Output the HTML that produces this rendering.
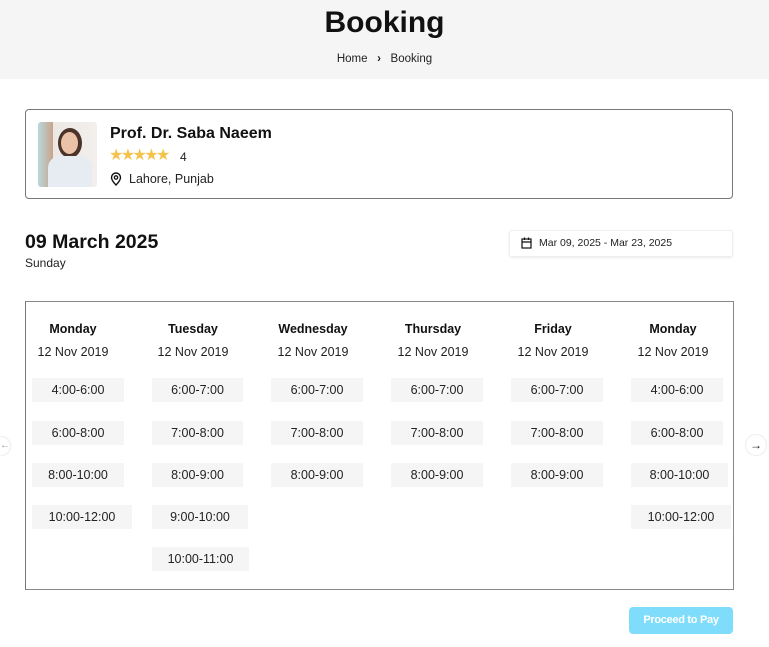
<!DOCTYPE html>
<html><head><meta charset="utf-8"><style>
*{margin:0;padding:0;box-sizing:border-box}
body{width:769px;height:647px;background:#fff;font-family:"Liberation Sans",Arial,sans-serif;color:#111;position:relative;overflow:hidden}
.a{position:absolute}
.hdr{left:0;top:0;width:769px;height:79px;background:#f5f5f5}
.slot{position:absolute;height:24px;background:#f5f5f5;font-size:12.5px;color:#222;line-height:24px;text-align:center}
.day{position:absolute;width:120px;text-align:center;font-size:12.5px;font-weight:bold;top:322px}
.dt{position:absolute;width:120px;text-align:center;font-size:12.5px;top:345px;color:#222}
</style></head><body>
<div class="a hdr"></div>
<div class="a" style="left:0;width:769px;top:6px;text-align:center;font-size:30px;font-weight:bold">Booking</div>
<div class="a" style="left:0;width:769px;top:53px;text-align:center;font-size:11.5px;color:#222">Home &nbsp;&nbsp;<b>›</b>&nbsp;&nbsp; Booking</div>

<div class="a" style="left:25px;top:109px;width:708px;height:90px;border:1px solid #777;border-radius:4px"></div>
<div class="a" style="left:38px;top:122px;width:59px;height:65px;border-radius:3px;background:linear-gradient(90deg,#b8d8dc 0,#c9a48c 25%,#ece8e4 25%,#f2efec 100%);overflow:hidden">
<div class="a" style="left:20px;top:6px;width:24px;height:30px;border-radius:50%;background:#4a3328"></div>
<div class="a" style="left:23px;top:10px;width:17px;height:22px;border-radius:50%;background:#e9c2a8"></div>
<div class="a" style="left:10px;top:34px;width:44px;height:34px;border-radius:12px 12px 0 0;background:#e6ecf2"></div>
</div>
<div class="a" style="left:110px;top:125px;font-size:16px;font-weight:bold">Prof. Dr. Saba Naeem</div>
<div class="a" style="left:109px;top:145px;font-size:16px;color:#f4c34d;letter-spacing:-2.6px">★★★★★</div>
<div class="a" style="left:180px;top:150px;font-size:12px;color:#222">4</div>
<svg class="a" style="left:110px;top:172px" width="12" height="14" viewBox="0 0 12 14"><path d="M6 13C6 13 1.5 8.5 1.5 5.5A4.5 4.5 0 0 1 10.5 5.5C10.5 8.5 6 13 6 13Z" fill="none" stroke="#111" stroke-width="1.4"/><circle cx="6" cy="5.5" r="1.7" fill="none" stroke="#111" stroke-width="1.3"/></svg>
<div class="a" style="left:129px;top:172px;font-size:12.5px;color:#222">Lahore, Punjab</div>

<div class="a" style="left:25px;top:231px;font-size:19.5px;font-weight:bold">09 March 2025</div>
<div class="a" style="left:25px;top:256px;font-size:12px;color:#222">Sunday</div>
<div class="a" style="left:509px;top:230px;width:224px;height:27px;border:1px solid #eee;border-radius:3px;box-shadow:0 1px 2px rgba(0,0,0,.08)"></div>
<svg class="a" style="left:521px;top:237px" width="11" height="12" viewBox="0 0 11 12"><rect x="1" y="2" width="9" height="9" fill="none" stroke="#111" stroke-width="1.2"/><path d="M1 5H10M3.5 0.5V3M7.5 0.5V3" stroke="#111" stroke-width="1.2"/></svg>
<div class="a" style="left:539px;top:237px;font-size:10.5px;color:#222">Mar 09, 2025 - Mar 23, 2025</div>

<div class="a" style="left:25px;top:301px;width:709px;height:289px;border:1px solid #888;border-left-color:#777"></div>
<div class="a" style="left:0;top:437px;width:10px;height:18px;border-radius:0 9px 9px 0;background:#fff;box-shadow:0 0 2px rgba(0,0,0,.2);font-size:10px;color:#999;line-height:18px">←</div>
<div class="a" style="left:745px;top:434px;width:22px;height:22px;border-radius:50%;border:1px solid #eee;background:#fff;text-align:center;font-size:12px;line-height:20px">→</div>

<div class="day" style="left:13px">Monday</div><div class="dt" style="left:13px">12 Nov 2019</div>
<div class="day" style="left:133px">Tuesday</div><div class="dt" style="left:133px">12 Nov 2019</div>
<div class="day" style="left:253px">Wednesday</div><div class="dt" style="left:253px">12 Nov 2019</div>
<div class="day" style="left:373px">Thursday</div><div class="dt" style="left:373px">12 Nov 2019</div>
<div class="day" style="left:493px">Friday</div><div class="dt" style="left:493px">12 Nov 2019</div>
<div class="day" style="left:613px">Monday</div><div class="dt" style="left:613px">12 Nov 2019</div>

<div class="slot" style="left:32px;top:378px;width:92px">4:00-6:00</div>
<div class="slot" style="left:32px;top:421px;width:92px">6:00-8:00</div>
<div class="slot" style="left:32px;top:463px;width:92px">8:00-10:00</div>
<div class="slot" style="left:32px;top:505px;width:100px">10:00-12:00</div>

<div class="slot" style="left:152px;top:378px;width:91px">6:00-7:00</div>
<div class="slot" style="left:152px;top:421px;width:91px">7:00-8:00</div>
<div class="slot" style="left:152px;top:463px;width:91px">8:00-9:00</div>
<div class="slot" style="left:152px;top:505px;width:96px">9:00-10:00</div>
<div class="slot" style="left:152px;top:547px;width:97px">10:00-11:00</div>

<div class="slot" style="left:271px;top:378px;width:92px">6:00-7:00</div>
<div class="slot" style="left:271px;top:421px;width:92px">7:00-8:00</div>
<div class="slot" style="left:271px;top:463px;width:92px">8:00-9:00</div>

<div class="slot" style="left:391px;top:378px;width:92px">6:00-7:00</div>
<div class="slot" style="left:391px;top:421px;width:92px">7:00-8:00</div>
<div class="slot" style="left:391px;top:463px;width:92px">8:00-9:00</div>

<div class="slot" style="left:511px;top:378px;width:92px">6:00-7:00</div>
<div class="slot" style="left:511px;top:421px;width:92px">7:00-8:00</div>
<div class="slot" style="left:511px;top:463px;width:92px">8:00-9:00</div>

<div class="slot" style="left:631px;top:378px;width:92px">4:00-6:00</div>
<div class="slot" style="left:631px;top:421px;width:92px">6:00-8:00</div>
<div class="slot" style="left:631px;top:463px;width:97px">8:00-10:00</div>
<div class="slot" style="left:631px;top:505px;width:100px">10:00-12:00</div>

<div class="a" style="left:629px;top:607px;width:104px;height:27px;border-radius:4px;background:#7fdcfb;color:#fff;font-size:11px;font-weight:bold;text-align:center;line-height:27px;letter-spacing:-0.3px">Proceed to Pay</div>
</body></html>
